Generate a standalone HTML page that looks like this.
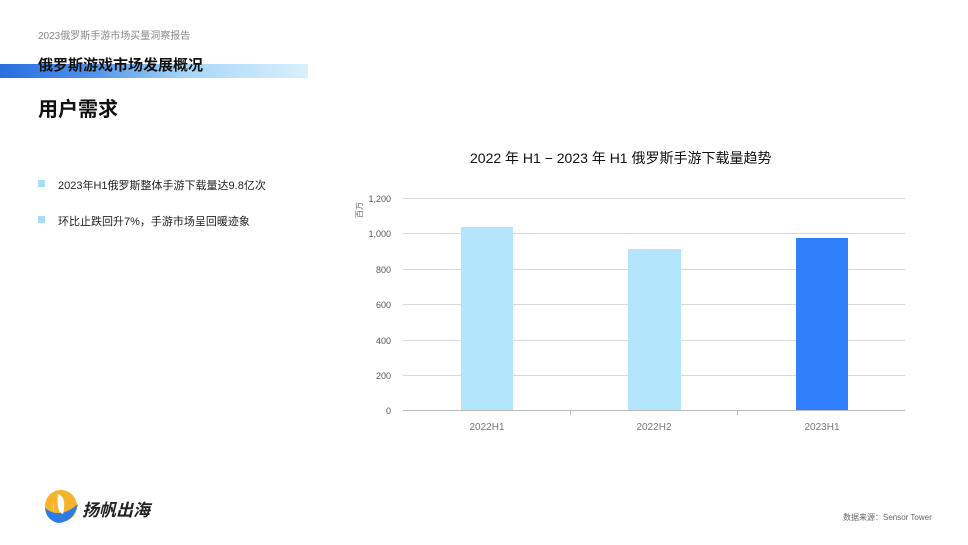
<!DOCTYPE html>
<html><head><meta charset="utf-8"><style>
body{margin:0;width:968px;height:545px;background:#fff;position:relative;overflow:hidden;font-family:"Liberation Sans","Noto Sans CJK SC",sans-serif;color:#111}
.a{position:absolute;white-space:nowrap}
</style></head><body>
<div class="a" style="left:38px;top:27px;font-size:10px;color:#888">2023俄罗斯手游市场买量洞察报告</div>
<div class="a" style="left:0;top:64px;width:308px;height:14px;background:linear-gradient(90deg,#2a6ee0 0%,#4f92ea 30%,#a6d6f8 60%,#d9f0fd 100%)"></div>
<div class="a" style="left:38px;top:54px;font-size:15px;font-weight:bold;color:#111">俄罗斯游戏市场发展概况</div>
<div class="a" style="left:38px;top:93px;font-size:20px;font-weight:bold;color:#111">用户需求</div>
<div class="a" style="left:38px;top:180px;width:7px;height:7px;background:#a9dcf7"></div>
<div class="a" style="left:58px;top:177px;font-size:11px;color:#222">2023年H1俄罗斯整体手游下载量达9.8亿次</div>
<div class="a" style="left:38px;top:216px;width:7px;height:7px;background:#a9dcf7"></div>
<div class="a" style="left:58px;top:213px;font-size:11px;color:#222">环比止跌回升7%，手游市场呈回暖迹象</div>
<div class="a" style="left:470px;top:148px;font-size:14px;color:#111">2022 年 H1 − 2023 年 H1 俄罗斯手游下载量趋势</div>
<svg class="a" style="left:0;top:0" width="968" height="545">
<g stroke="#d9d9d9" stroke-width="1">
<line x1="403" x2="905" y1="198.5" y2="198.5"/><line x1="403" x2="905" y1="233.5" y2="233.5"/>
<line x1="403" x2="905" y1="269.5" y2="269.5"/><line x1="403" x2="905" y1="304.5" y2="304.5"/>
<line x1="403" x2="905" y1="340.5" y2="340.5"/><line x1="403" x2="905" y1="375.5" y2="375.5"/>
<line x1="403" x2="905" y1="410.5" y2="410.5" stroke="#bbb"/>
<line x1="570.5" x2="570.5" y1="410" y2="415" stroke="#bbb"/><line x1="737.5" x2="737.5" y1="410" y2="415" stroke="#bbb"/>
</g>
<rect x="461" y="227" width="52" height="183" fill="#b3e5fc"/>
<rect x="628" y="249" width="53" height="161" fill="#b3e5fc"/>
<rect x="796" y="238" width="52" height="172" fill="#2f80fa"/>
<g font-size="9" fill="#555" text-anchor="end" font-family="Liberation Sans,sans-serif">
<text x="391" y="202">1,200</text><text x="391" y="237">1,000</text><text x="391" y="273">800</text>
<text x="391" y="308">600</text><text x="391" y="344">400</text><text x="391" y="379">200</text><text x="391" y="414">0</text>
</g>
<g font-size="10" fill="#777" text-anchor="middle" font-family="Liberation Sans,sans-serif">
<text x="487" y="430">2022H1</text><text x="654" y="430">2022H2</text><text x="822" y="430">2023H1</text>
</g>
<text x="0" y="0" font-size="8" fill="#666" transform="translate(362,218) rotate(-90)">百万</text>
<circle cx="61" cy="506" r="16" fill="#f6b42c"/>
<path d="M45 508 Q60 520 78 504 Q74 522 58 523 Q46 520 45 508Z" fill="#2d7be6"/>
<path d="M58 494 Q67 497 63 514 Q56 512 58 494Z" fill="#fff"/>
<path d="M54 502 Q51 509 56 514 Q52 510 54 502Z" fill="#fff"/>
</svg>
<div class="a" style="left:82px;top:496px;font-size:17px;font-weight:bold;font-style:italic;color:#222">扬帆出海</div>
<div class="a" style="left:843px;top:512px;font-size:8px;color:#666">数据来源：Sensor Tower</div>
</body></html>
